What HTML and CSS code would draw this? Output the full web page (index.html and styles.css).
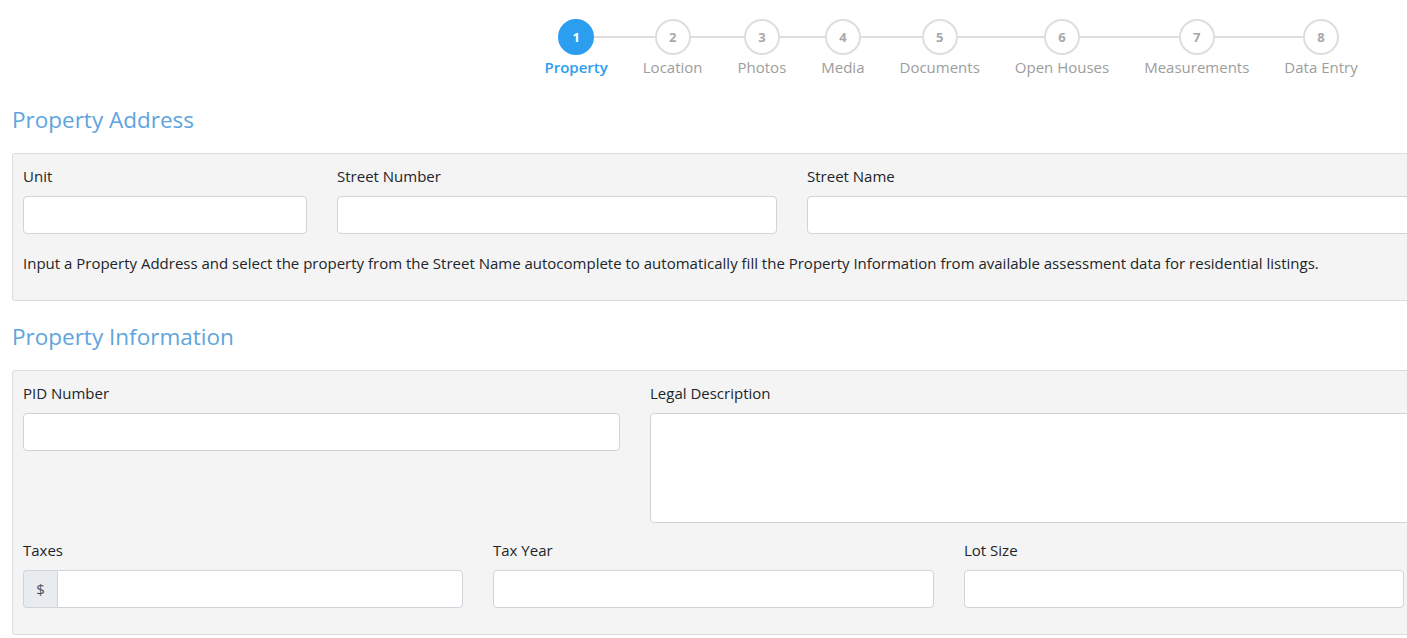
FILE: index.html
```html
<!DOCTYPE html>
<html lang="en">
<head>
  <meta charset="UTF-8">
  <title>New Listing - Property</title>
  <meta name="viewport" content="width=device-width, initial-scale=1.0">
  <link rel="stylesheet" href="styles.css">
</head>
<body>
  <div class="page">
    <ol class="stepper">
      <li class="step active"><span class="circle">1</span><span class="step-label">Property</span></li>
      <li class="step"><span class="circle">2</span><span class="step-label">Location</span></li>
      <li class="step"><span class="circle">3</span><span class="step-label">Photos</span></li>
      <li class="step"><span class="circle">4</span><span class="step-label">Media</span></li>
      <li class="step"><span class="circle">5</span><span class="step-label">Documents</span></li>
      <li class="step"><span class="circle">6</span><span class="step-label">Open Houses</span></li>
      <li class="step"><span class="circle">7</span><span class="step-label">Measurements</span></li>
      <li class="step"><span class="circle">8</span><span class="step-label">Data Entry</span></li>
    </ol>

    <h3 class="section-title first">Property Address</h3>
    <div class="panel">
      <div class="row row-address">
        <div class="form-group">
          <label for="unit">Unit</label>
          <input type="text" id="unit">
        </div>
        <div class="form-group">
          <label for="streetNumber">Street Number</label>
          <input type="text" id="streetNumber">
        </div>
        <div class="form-group">
          <label for="streetName">Street Name</label>
          <input type="text" id="streetName">
        </div>
      </div>
      <p class="help">Input a Property Address and select the property from the Street Name autocomplete to automatically fill the Property Information from available assessment data for residential listings.</p>
    </div>

    <h3 class="section-title">Property Information</h3>
    <div class="panel">
      <div class="row row-info">
        <div class="form-group">
          <label for="pid">PID Number</label>
          <input type="text" id="pid">
        </div>
        <div class="form-group">
          <label for="legal">Legal Description</label>
          <textarea id="legal"></textarea>
        </div>
      </div>
      <div class="row row-thirds">
        <div class="form-group">
          <label for="taxes">Taxes</label>
          <div class="input-group">
            <span class="addon">$</span>
            <input type="text" id="taxes">
          </div>
        </div>
        <div class="form-group">
          <label for="taxYear">Tax Year</label>
          <input type="text" id="taxYear">
        </div>
        <div class="form-group">
          <label for="lotSize">Lot Size</label>
          <input type="text" id="lotSize">
        </div>
      </div>
    </div>
  </div>
</body>
</html>
```

FILE: styles.css
```css
html, body { margin:0; overflow:hidden; }
body { background:#fff; font-family:'Open Sans','Noto Sans',Arial,sans-serif; font-size:15px; color:#212529; }
.page { width:1460px; padding:0 12px; }

/* stepper */
.stepper { list-style:none; margin:0; padding:19px 0 0 515px; display:flex; }
.step { position:relative; display:flex; flex-direction:column; align-items:center; padding:0 17.5px; }
.step::before { content:''; position:absolute; top:17px; left:0; right:0; height:2px; background:#dedede; }
.step:first-child::before { left:50%; }
.step:last-child::before { right:50%; }
.circle { position:relative; box-sizing:border-box; width:36px; height:36px; border-radius:50%; border:2px solid #dedede; background:#fff; color:#a8a8a8; font-size:13px; font-weight:700; display:flex; align-items:center; justify-content:center; }
.step-label { margin-top:2px; line-height:20px; font-size:15px; color:#9d9d9d; white-space:nowrap; }
.step.active .circle { background:#2b9ef0; border-color:#2b9ef0; color:#fff; }
.step.active .step-label { color:#2b9ef0; font-weight:600; }

/* sections */
.section-title { margin:21px 0 18px; font-size:22.5px; line-height:30px; font-weight:400; color:#5ea4de; }
.section-title.first { margin-top:28px; }
.panel { background:#f4f4f4; border:1px solid #dcdcdc; border-radius:3px; padding:11px 10px 10px; }
.row { display:grid; column-gap:30px; }
.row-address { grid-template-columns:284px 440px 1fr; }
.row-info { grid-template-columns:597px 1fr; }
.row-thirds { grid-template-columns:440px 441px 440px; }
.form-group { margin-bottom:16px; }
label { display:block; line-height:22px; margin-bottom:9px; }
input, textarea { display:block; box-sizing:border-box; width:100%; height:38px; margin:0; padding:6px 12px; border:1px solid #ced4da; border-radius:4px; background:#fff; font:inherit; color:#495057; }
textarea { height:110px; resize:none; }
.input-group { display:flex; }
.addon { box-sizing:border-box; width:34px; height:38px; display:flex; align-items:center; justify-content:center; background:#e9ecef; border:1px solid #ced4da; border-right:none; border-radius:4px 0 0 4px; color:#495057; }
.input-group input { flex:1; border-radius:0 4px 4px 0; }
.help { margin:2px 0 16px; line-height:22px; }
```
